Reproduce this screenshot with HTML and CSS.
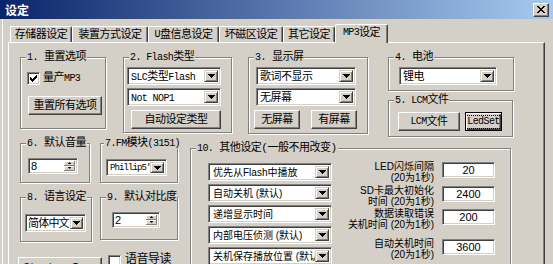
FILE: index.html
```html
<!DOCTYPE html>
<html>
<head>
<meta charset="utf-8">
<title>设定</title>
<link rel="stylesheet" href="styles.css">
</head>
<body>
<div class="window">
  <div class="titlebar">
    <span class="title">设定</span>
    <span class="close"><svg width="8" height="7" viewBox="0 0 8 7"><path d="M0 0h2v1H0zM6 0h2v1H6zM1 1h2v1H1zM5 1h2v1H5zM2 2h4v1H2zM3 3h2v1H3zM2 4h4v1H2zM1 5h2v1H1zM5 5h2v1H5zM0 6h2v1H0zM6 6h2v1H6z"/></svg></span>
  </div>
  <div class="client">
    <div class="tabs">
      <div class="tab t1">存储器设定</div>
      <div class="tab t2">装置方式设定</div>
      <div class="tab t3"><span class="lt">U</span>盘信息设定</div>
      <div class="tab t4">坏磁区设定</div>
      <div class="tab t5">其它设定</div>
      <div class="tab t6 active"><span class="lt">MP3</span>设定</div>
    </div>
    <div class="panel">
      <div class="toprow">
        <div class="group g1">
          <span class="legend"><span class="lt">1.</span> 重置选项</span>
          <div class="checkrow cr1">
            <span class="chk"><svg width="7" height="7" viewBox="0 0 7 7"><path d="M6 0h1v1H6zM5 1h2v1H5zM0 2h1v1H0zM4 2h3v1H4zM0 3h2v1H0zM3 3h3v1H3zM0 4h5v1H0zM1 5h3v1H1zM2 6h1v1H2z"/></svg></span>
            <span class="cklabel">量产<span class="lt">MP3</span></span>
          </div>
          <div class="btn b-reset">重置所有选项</div>
        </div>
        <div class="group g2">
          <span class="legend"><span class="lt">2. Flash</span>类型</span>
          <div class="combo c-flash first"><span class="ct"><span class="lt">SLC</span>类型<span class="lt">Flash</span></span><span class="cb"><svg width="7" height="4" viewBox="0 0 7 4"><path d="M0 0h7v1H0zM1 1h5v1H1zM2 2h3v1H2zM3 3h1v1H3z"/></svg></span></div>
          <div class="combo c-flash next"><span class="ct"><span class="lt">Not NOP1</span></span><span class="cb"><svg width="7" height="4" viewBox="0 0 7 4"><path d="M0 0h7v1H0zM1 1h5v1H1zM2 2h3v1H2zM3 3h1v1H3z"/></svg></span></div>
          <div class="btn b-auto">自动设定类型</div>
        </div>
        <div class="group g3">
          <span class="legend"><span class="lt">3.</span> 显示屏</span>
          <div class="combo c-disp first"><span class="ct">歌词不显示</span><span class="cb"><svg width="7" height="4" viewBox="0 0 7 4"><path d="M0 0h7v1H0zM1 1h5v1H1zM2 2h3v1H2zM3 3h1v1H3z"/></svg></span></div>
          <div class="combo c-disp next"><span class="ct">无屏幕</span><span class="cb"><svg width="7" height="4" viewBox="0 0 7 4"><path d="M0 0h7v1H0zM1 1h5v1H1zM2 2h3v1H2zM3 3h1v1H3z"/></svg></span></div>
          <div class="btnrow br3">
            <div class="btn b-scr">无屏幕</div>
            <div class="btn b-scr">有屏幕</div>
          </div>
        </div>
        <div class="col45">
          <div class="group g4">
            <span class="legend"><span class="lt">4.</span> 电池</span>
            <div class="combo c-bat"><span class="ct">锂电</span><span class="cb"><svg width="7" height="4" viewBox="0 0 7 4"><path d="M0 0h7v1H0zM1 1h5v1H1zM2 2h3v1H2zM3 3h1v1H3z"/></svg></span></div>
          </div>
          <div class="group g5">
            <span class="legend"><span class="lt">5. LCM</span>文件</span>
            <div class="btnrow br5">
              <div class="btn b-lcm"><span class="lt">LCM</span>文件</div>
              <div class="btn b-led default"><span class="focus lt">LedSet</span></div>
            </div>
          </div>
        </div>
      </div>

      <div class="bottom">
        <div class="leftcol">
          <div class="rowa">
            <div class="group g6">
              <span class="legend"><span class="lt">6.</span> 默认音量</span>
              <div class="spin s-vol"><span class="sv">8</span><span class="updown"><span class="sb"><svg width="5" height="3" viewBox="0 0 5 3"><path d="M2 0h1v1H2zM1 1h3v1H1zM0 2h5v1H0z"/></svg></span><span class="sb"><svg width="5" height="3" viewBox="0 0 5 3"><path d="M0 0h5v1H0zM1 1h3v1H1zM2 2h1v1H2z"/></svg></span></span></div>
            </div>
            <div class="group g7">
              <span class="legend"><span class="lt">7.FM</span>模块<span class="lt">(3151)</span></span>
              <div class="combo c-fm"><span class="ct narrow">Phillip5'</span><span class="cb"><svg width="7" height="4" viewBox="0 0 7 4"><path d="M0 0h7v1H0zM1 1h5v1H1zM2 2h3v1H2zM3 3h1v1H3z"/></svg></span></div>
            </div>
          </div>
          <div class="rowb">
            <div class="group g8">
              <span class="legend"><span class="lt">8.</span> 语言设定</span>
              <div class="combo c-lang"><span class="ct">简体中文</span><span class="cb"><svg width="7" height="4" viewBox="0 0 7 4"><path d="M0 0h7v1H0zM1 1h5v1H1zM2 2h3v1H2zM3 3h1v1H3z"/></svg></span></div>
            </div>
            <div class="group g9">
              <span class="legend"><span class="lt">9.</span> 默认对比度</span>
              <div class="spin s-con"><span class="sv">2</span><span class="updown"><span class="sb"><svg width="5" height="3" viewBox="0 0 5 3"><path d="M2 0h1v1H2zM1 1h3v1H1zM0 2h5v1H0z"/></svg></span><span class="sb"><svg width="5" height="3" viewBox="0 0 5 3"><path d="M0 0h5v1H0zM1 1h3v1H1zM2 2h1v1H2z"/></svg></span></span></div>
            </div>
          </div>
          <div class="rowc">
            <div class="btn b-start">Startup Icon</div>
            <span class="chk chk2"></span>
            <span class="voice">语音导读</span>
          </div>
        </div>

        <div class="group g10">
          <span class="legend"><span class="lt">10.</span> 其他设定(一般不用改变)</span>
          <div class="g10body">
            <div class="sel10">
              <div class="combo c-oth"><span class="ct">优先从Flash中播放</span><span class="cb"><svg width="7" height="4" viewBox="0 0 7 4"><path d="M0 0h7v1H0zM1 1h5v1H1zM2 2h3v1H2zM3 3h1v1H3z"/></svg></span></div>
              <div class="combo c-oth"><span class="ct">自动关机 (默认)</span><span class="cb"><svg width="7" height="4" viewBox="0 0 7 4"><path d="M0 0h7v1H0zM1 1h5v1H1zM2 2h3v1H2zM3 3h1v1H3z"/></svg></span></div>
              <div class="combo c-oth"><span class="ct">递增显示时间</span><span class="cb"><svg width="7" height="4" viewBox="0 0 7 4"><path d="M0 0h7v1H0zM1 1h5v1H1zM2 2h3v1H2zM3 3h1v1H3z"/></svg></span></div>
              <div class="combo c-oth"><span class="ct">内部电压侦测 (默认)</span><span class="cb"><svg width="7" height="4" viewBox="0 0 7 4"><path d="M0 0h7v1H0zM1 1h5v1H1zM2 2h3v1H2zM3 3h1v1H3z"/></svg></span></div>
              <div class="combo c-oth"><span class="ct">关机保存播放位置 (默认)</span><span class="cb"><svg width="7" height="4" viewBox="0 0 7 4"><path d="M0 0h7v1H0zM1 1h5v1H1zM2 2h3v1H2zM3 3h1v1H3z"/></svg></span></div>
            </div>
            <div class="opts">
              <div class="orow o1"><div class="olabel">LED闪烁间隔<br>(20为1秒)</div><div class="edit">20</div></div>
              <div class="orow o2"><div class="olabel">SD卡最大初始化<br>时间 (20为1秒)</div><div class="edit">2400</div></div>
              <div class="orow o3"><div class="olabel">数据读取错误<br>关机时间 (20为1秒)</div><div class="edit">200</div></div>
              <div class="orow o4"><div class="olabel">自动关机时间<br>(20为1秒)</div><div class="edit">3600</div></div>
            </div>
          </div>
        </div>
      </div>
    </div>
  </div>
</div>
</body>
</html>
```

FILE: styles.css
```css
* { box-sizing: border-box; }
html, body { margin: 0; padding: 0; }
body {
  width: 553px;
  height: 264px;
  overflow: hidden;
  background: #d4d0c8;
  color: #000;
  font-family: "Liberation Mono", "Noto Sans CJK SC", monospace;
  font-size: 11px;
  letter-spacing: -0.5px;
}
.lt { font-size: 10px; letter-spacing: -0.6px; }
.window {
  width: 553px;
  height: 264px;
  background: linear-gradient(to right, #d4d0c8 0 2px, #fff 2px 3px, #d4d0c8 3px);
}

/* title bar */
.titlebar {
  height: 19px;
  display: flex;
  align-items: center;
  justify-content: space-between;
  padding: 0 4px 0 5px;
  background: linear-gradient(to right, #0a246a, #a6caf0);
}
.title {
  color: #fff;
  font-family: "Noto Sans CJK SC", sans-serif;
  font-weight: bold;
  font-size: 12px;
  letter-spacing: 0;
  line-height: 19px;
}
.close {
  width: 16px;
  height: 14px;
  display: flex;
  align-items: center;
  justify-content: center;
  background: #d4d0c8;
  border: 1px solid;
  border-color: #fff #404040 #404040 #fff;
  box-shadow: inset -1px -1px 0 #808080;
}
.close svg, .cb svg, .sb svg, .chk svg { display: block; fill: #000; }

/* client */
.client { padding: 5px 8px 0 8px; }

.tabs {
  display: flex;
  align-items: flex-end;
  height: 18px;
  padding-left: 2px;
  position: relative;
  z-index: 1;
}
.tab {
  height: 16px;
  border-top: 1px solid #fff;
  border-left: 1px solid #fff;
  border-right: 1px solid #404040;
  box-shadow: inset -1px 0 0 #808080;
  border-radius: 2px 2px 0 0;
  display: flex;
  align-items: center;
  justify-content: center;
  line-height: 14px;
  white-space: nowrap;
}
.t1 { width: 62px; }
.t2 { width: 76px; }
.t3 { width: 71px; }
.t4 { width: 64px; }
.t5 { width: 52px; }
.t6 { width: 53px; }
.tab.active {
  height: 19px;
  margin-bottom: -1px;
  background: #d4d0c8;
  padding-bottom: 2px;
}

.panel {
  height: 230px;
  background: #d4d0c8;
  border-top: 1px solid #fff;
  border-left: 1px solid #fff;
  border-right: 1px solid #404040;
  box-shadow: inset -1px 0 0 #808080;
  padding: 14px 0 0 11px;
}

/* group boxes */
.group {
  border: 1px solid #808080;
  box-shadow: 1px 1px 0 #fff, inset 1px 1px 0 #fff;
  flex: none;
}
.legend {
  display: block;
  width: max-content;
  height: 12px;
  line-height: 12px;
  margin: -7px 0 0 5px;
  padding: 0 1px;
  background: #d4d0c8;
  white-space: nowrap;
}

.toprow { display: flex; align-items: flex-start; }
.g1 { width: 86px; height: 72px; }
.g2 { width: 109px; height: 76px; margin-left: 17px; }
.g3 { width: 120px; height: 77px; margin-left: 16px; }
.col45 { width: 126px; margin-left: 20px; }
.g4 { width: 126px; height: 34px; }
.g5 { width: 125px; height: 37px; margin-top: 9px; }

/* controls */
.btn {
  display: flex;
  align-items: center;
  justify-content: center;
  height: 19px;
  background: #d4d0c8;
  border: 1px solid;
  border-color: #fff #404040 #404040 #fff;
  box-shadow: inset -1px -1px 0 #808080;
  white-space: nowrap;
  line-height: 14px;
}
.btn.default {
  border-color: #000;
  box-shadow: inset 1px 1px 0 #fff, inset -1px -1px 0 #404040, inset -2px -2px 0 #808080;
}
.focus { outline: 1px dotted #000; outline-offset: 0; padding: 0 1px; line-height: 12px; }

.combo {
  display: flex;
  height: 18px;
  padding: 2px;
  background: #fff;
  border: 1px solid;
  border-color: #808080 #fff #fff #808080;
  box-shadow: inset 1px 1px 0 #404040, inset -1px -1px 0 #d4d0c8;
}
.ct {
  flex: 1;
  min-width: 0;
  overflow: hidden;
  white-space: nowrap;
  padding-left: 1px;
  line-height: 14px;
}
.cb {
  width: 14px;
  flex: none;
  display: flex;
  align-items: center;
  justify-content: center;
  background: #d4d0c8;
  border: 1px solid;
  border-color: #d4d0c8 #404040 #404040 #d4d0c8;
  box-shadow: inset 1px 1px 0 #fff, inset -1px -1px 0 #808080;
}

.chk {
  width: 13px;
  height: 13px;
  flex: none;
  display: flex;
  align-items: center;
  justify-content: center;
  background: #fff;
  border: 1px solid;
  border-color: #808080 #fff #fff #808080;
  box-shadow: inset 1px 1px 0 #404040, inset -1px -1px 0 #d4d0c8;
}

.spin {
  display: flex;
  height: 16px;
  padding: 2px;
  background: #fff;
  border: 1px solid;
  border-color: #808080 #fff #fff #808080;
  box-shadow: inset 1px 1px 0 #404040, inset -1px -1px 0 #d4d0c8;
}
.sv {
  flex: 1;
  font-family: "Liberation Sans", sans-serif;
  letter-spacing: 0;
  font-size: 11px;
  line-height: 11px;
}
.updown { width: 11px; display: flex; flex-direction: column; }
.sb {
  flex: 1;
  display: flex;
  align-items: center;
  justify-content: center;
  background: #d4d0c8;
  border-right: 1px solid #808080;
  border-bottom: 1px solid #808080;
  box-shadow: inset 1px 1px 0 #fff;
}
.sb svg { width: 3px; height: 2px; }

/* group 1 */
.checkrow { display: flex; align-items: center; }
.cr1 { margin: 9px 0 0 6px; }
.cklabel { margin-left: 3px; line-height: 13px; }
.b-reset { width: 74px; margin: 11px 0 0 7px; }

/* group 2 */
.c-flash { width: 94px; margin-left: 3px; }
.first { margin-top: 4px; }
.next { margin-top: 3px; }
.b-auto { width: 90px; margin: 4px 0 0 7px; }

/* group 3 */
.c-disp { width: 100px; margin-left: 7px; }
.btnrow { display: flex; }
.br3 { margin: 4px 0 0 5px; gap: 11px; }
.b-scr { width: 46px; }

/* group 4/5 */
.c-bat { width: 98px; margin: 4px 0 0 10px; }
.br5 { margin: 6px 0 0 9px; gap: 5px; }
.b-lcm { width: 62px; }
.b-led { width: 37px; }

/* bottom area */
.bottom { display: flex; align-items: flex-start; margin-top: 6px; }
.leftcol { width: 158px; flex: none; }
.rowa, .rowb { display: flex; align-items: flex-start; }
.g6 { width: 70px; height: 40px; }
.g7 { width: 78px; height: 40px; margin-left: 10px; }
.g7 .legend { margin-left: 3px; }
.s-vol { width: 50px; margin: 9px 0 0 7px; }
.c-fm { width: 61px; height: 17px; margin: 10px 0 0 5px; }
.narrow { font-size: 9px; letter-spacing: -0.9px; line-height: 13px; }

.rowb { margin-top: 14px; }
.g8 { width: 72px; height: 45px; }
.g9 { width: 78px; height: 43px; margin-left: 8px; }
.c-lang { width: 61px; margin: 11px 0 0 4px; }
.c-lang .ct { padding-left: 0; letter-spacing: -0.8px; }
.c-lang .cb { width: 13px; }
.s-con { width: 48px; margin: 9px 0 0 11px; }

.rowc { display: flex; align-items: flex-start; margin-top: 15px; }
.b-start { width: 84px; height: 20px; margin-left: -2px; }
.chk2 { margin: -2px 0 0 6px; }
.voice { margin: -4px 0 0 4px; font-size: 12px; line-height: 14px; }

/* group 10 */
.g10 {
  width: 321px;
  height: 130px;
  margin: 5px 0 0 12px;
  font-family: "Liberation Sans", "Noto Sans CJK SC", sans-serif;
  font-size: 10px;
  letter-spacing: 0;
}
.g10 .legend {
  font-family: "Liberation Mono", "Noto Sans CJK SC", monospace;
  font-size: 11px;
  letter-spacing: -0.5px;
}
.g10body { display: flex; align-items: flex-start; }
.sel10 {
  width: 124px;
  margin: 9px 0 0 17px;
  display: flex;
  flex-direction: column;
  gap: 3px;
}
.c-oth { width: 124px; }
.c-oth .ct { line-height: 13px; padding-left: 2px; }
.opts { margin: 7px 0 0 6px; display: flex; flex-direction: column; }
.orow { display: flex; align-items: flex-start; gap: 8px; }
.olabel {
  width: 96px;
  text-align: right;
  line-height: 11px;
  white-space: nowrap;
}
.edit {
  width: 53px;
  height: 16px;
  margin-top: 1px;
  background: #fff;
  border: 1px solid;
  border-color: #808080 #fff #fff #808080;
  box-shadow: inset 1px 1px 0 #404040, inset -1px -1px 0 #d4d0c8;
  text-align: center;
  line-height: 14px;
  font-size: 11px;
}
.o2 { margin-top: 2px; }
.o3 { margin-top: 1px; }
.o4 { margin-top: 8px; }
```
